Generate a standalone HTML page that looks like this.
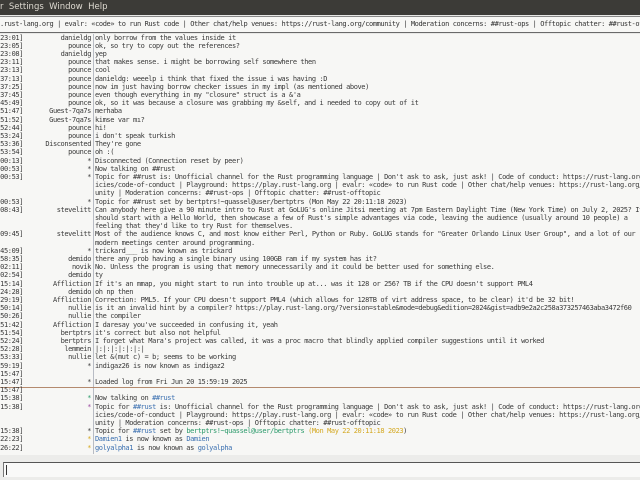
<!DOCTYPE html>
<html><head><style>
*{margin:0;padding:0;box-sizing:border-box}
body{width:640px;height:480px;overflow:hidden;background:#f7f7f5;position:relative;font-family:"DejaVu Sans Mono","Liberation Mono",monospace;}
#menu{position:absolute;left:0;top:0;width:640px;height:15px;background:#3c3b37;color:#dfdbd2;font-family:"DejaVu Sans","Liberation Sans",sans-serif;font-size:8.5px;line-height:15px;white-space:pre}
#tb{position:absolute;left:0;top:15px;width:640px;height:19px;background:#e8e8e6}
#topic{position:absolute;left:0;top:16px;width:640px;height:17px;background:#f7f7f5;border-top:1px solid #888;border-bottom:1px solid #6a6a6a;font-size:7px;letter-spacing:-0.41px;line-height:15px;white-space:pre;color:#333;overflow:hidden}
.l{position:absolute;left:0;height:8.2px;width:640px;font-size:7px;letter-spacing:-0.41px;line-height:8.2px;white-space:pre;color:#3a3a3a}
.t{position:absolute;right:617px;}
.n{position:absolute;right:549px;}
.m{position:absolute;left:95px;}
#sep{position:absolute;left:93px;top:34px;width:1px;height:420px;background:#b8bcc4}
#brown{position:absolute;left:0;top:387px;width:640px;height:1px;background:#b48a6e}
#bot{position:absolute;left:0;top:455px;width:640px;height:25px;background:#ececea}
#inp{position:absolute;left:3px;top:462px;width:640px;height:15px;background:#f9f9f8;border-top:1px solid #555;border-left:1px solid #777}
#cur{position:absolute;left:6px;top:465px;width:1px;height:10px;background:#333}
.b{color:#3a6fb0}.g{color:#2a9a6a}.y{color:#d4a820}
</style></head><body>
<div id="menu">r  Settings  Window  Help</div>
<div id="tb"></div>
<div id="topic">.rust-lang.org | evalr: «code» to run Rust code | Other chat/help venues: https://rust-lang.org/community | Moderation concerns: ##rust-ops | Offtopic chatter: ##rust-offtopic</div>
<div id="sep"></div>
<div id="brown"></div>
<div class="l" style="top:33.6px"><span class="t">23:01]</span><span class="n">danieldg</span><span class="m">only borrow from the values inside it</span></div>
<div class="l" style="top:41.8px"><span class="t">23:05]</span><span class="n">pounce</span><span class="m">ok, so try to copy out the references?</span></div>
<div class="l" style="top:50.0px"><span class="t">23:08]</span><span class="n">danieldg</span><span class="m">yep</span></div>
<div class="l" style="top:58.2px"><span class="t">23:11]</span><span class="n">pounce</span><span class="m">that makes sense. i might be borrowing self somewhere then</span></div>
<div class="l" style="top:66.4px"><span class="t">23:13]</span><span class="n">pounce</span><span class="m">cool</span></div>
<div class="l" style="top:74.6px"><span class="t">37:13]</span><span class="n">pounce</span><span class="m">danieldg: weeelp i think that fixed the issue i was having :D</span></div>
<div class="l" style="top:82.8px"><span class="t">37:25]</span><span class="n">pounce</span><span class="m">now im just having borrow checker issues in my impl (as mentioned above)</span></div>
<div class="l" style="top:91.0px"><span class="t">37:45]</span><span class="n">pounce</span><span class="m">even though everything in my "closure" struct is a &amp;'a</span></div>
<div class="l" style="top:99.2px"><span class="t">45:49]</span><span class="n">pounce</span><span class="m">ok, so it was because a closure was grabbing my &amp;self, and i needed to copy out of it</span></div>
<div class="l" style="top:107.4px"><span class="t">51:47]</span><span class="n">Guest-7qa7s</span><span class="m">merhaba</span></div>
<div class="l" style="top:115.6px"><span class="t">51:52]</span><span class="n">Guest-7qa7s</span><span class="m">kimse var mı?</span></div>
<div class="l" style="top:123.8px"><span class="t">52:44]</span><span class="n">pounce</span><span class="m">hi!</span></div>
<div class="l" style="top:132.0px"><span class="t">53:24]</span><span class="n">pounce</span><span class="m">i don't speak turkish</span></div>
<div class="l" style="top:140.2px"><span class="t">53:36]</span><span class="n">Disconsented</span><span class="m">They're gone</span></div>
<div class="l" style="top:148.4px"><span class="t">53:54]</span><span class="n">pounce</span><span class="m">oh :(</span></div>
<div class="l" style="top:156.6px"><span class="t">00:13]</span><span class="n">*</span><span class="m">Disconnected (Connection reset by peer)</span></div>
<div class="l" style="top:164.8px"><span class="t">00:53]</span><span class="n">*</span><span class="m">Now talking on ##rust</span></div>
<div class="l" style="top:173.0px"><span class="t">00:53]</span><span class="n">*</span><span class="m">Topic for ##rust is: Unofficial channel for the Rust programming language | Don't ask to ask, just ask! | Code of conduct: https://rust-lang.org/pol</span></div>
<div class="l" style="top:181.2px"><span class="m">icies/code-of-conduct | Playground: https://play.rust-lang.org | evalr: «code» to run Rust code | Other chat/help venues: https://rust-lang.org/comm</span></div>
<div class="l" style="top:189.4px"><span class="m">unity | Moderation concerns: ##rust-ops | Offtopic chatter: ##rust-offtopic</span></div>
<div class="l" style="top:197.6px"><span class="t">00:53]</span><span class="n">*</span><span class="m">Topic for ##rust set by bertptrs!~quassel@user/bertptrs (Mon May 22 20:11:18 2023)</span></div>
<div class="l" style="top:205.8px"><span class="t">08:43]</span><span class="n">stevelitt</span><span class="m">Can anybody here give a 90 minute intro to Rust at GoLUG's online Jitsi meeting at 7pm Eastern Daylight Time (New York Time) on July 2, 2025? It</span></div>
<div class="l" style="top:214.0px"><span class="m">should start with a Hello World, then showcase a few of Rust's simple advantages via code, leaving the audience (usually around 10 people) a</span></div>
<div class="l" style="top:222.2px"><span class="m">feeling that they'd like to try Rust for themselves.</span></div>
<div class="l" style="top:230.4px"><span class="t">09:45]</span><span class="n">stevelitt</span><span class="m">Most of the audience knows C, and most know either Perl, Python or Ruby. GoLUG stands for "Greater Orlando Linux User Group", and a lot of our</span></div>
<div class="l" style="top:238.6px"><span class="m">modern meetings center around programming.</span></div>
<div class="l" style="top:246.8px"><span class="t">45:09]</span><span class="n">*</span><span class="m">trickard___ is now known as trickard</span></div>
<div class="l" style="top:255.0px"><span class="t">58:35]</span><span class="n">demido</span><span class="m">there any prob having a single binary using 100GB ram if my system has it?</span></div>
<div class="l" style="top:263.2px"><span class="t">02:11]</span><span class="n">novik</span><span class="m">No. Unless the program is using that memory unnecessarily and it could be better used for something else.</span></div>
<div class="l" style="top:271.4px"><span class="t">02:54]</span><span class="n">demido</span><span class="m">ty</span></div>
<div class="l" style="top:279.6px"><span class="t">15:14]</span><span class="n">Affliction</span><span class="m">If it's an mmap, you might start to run into trouble up at... was it 128 or 256? TB if the CPU doesn't support PML4</span></div>
<div class="l" style="top:287.8px"><span class="t">24:28]</span><span class="n">demido</span><span class="m">oh np then</span></div>
<div class="l" style="top:296.0px"><span class="t">29:19]</span><span class="n">Affliction</span><span class="m">Correction: PML5. If your CPU doesn't support PML4 (which allows for 128TB of virt address space, to be clear) it'd be 32 bit!</span></div>
<div class="l" style="top:304.2px"><span class="t">50:14]</span><span class="n">nullie</span><span class="m">is it an invalid hint by a compiler? https://play.rust-lang.org/?version=stable&amp;mode=debug&amp;edition=2024&amp;gist=adb9e2a2c258a373257463aba3472f60</span></div>
<div class="l" style="top:312.4px"><span class="t">50:26]</span><span class="n">nullie</span><span class="m">the compiler</span></div>
<div class="l" style="top:320.6px"><span class="t">51:42]</span><span class="n">Affliction</span><span class="m">I daresay you've succeeded in confusing it, yeah</span></div>
<div class="l" style="top:328.8px"><span class="t">51:54]</span><span class="n">bertptrs</span><span class="m">it's correct but also not helpful</span></div>
<div class="l" style="top:337.0px"><span class="t">52:24]</span><span class="n">bertptrs</span><span class="m">I forget what Mara's project was called, it was a proc macro that blindly applied compiler suggestions until it worked</span></div>
<div class="l" style="top:345.2px"><span class="t">52:28]</span><span class="n">lemmein</span><span class="m">|:|:|:|:|:|:|</span></div>
<div class="l" style="top:353.4px"><span class="t">53:33]</span><span class="n">nullie</span><span class="m">let &amp;(mut c) = b; seems to be working</span></div>
<div class="l" style="top:361.6px"><span class="t">59:19]</span><span class="n">*</span><span class="m">indigaz26 is now known as indigaz2</span></div>
<div class="l" style="top:369.8px"><span class="t">15:47]</span></div>
<div class="l" style="top:378.0px"><span class="t">15:47]</span><span class="n">*</span><span class="m">Loaded log from Fri Jun 20 15:59:19 2025</span></div>
<div class="l" style="top:386.2px"><span class="t">15:47]</span></div>
<div class="l" style="top:394.4px"><span class="t">15:38]</span><span class="n g">*</span><span class="m">Now talking on <span class="b">##rust</span></span></div>
<div class="l" style="top:402.6px"><span class="t">15:38]</span><span class="n" style="color:#9a4aa0">*</span><span class="m">Topic for <span class="b">##rust</span> is: Unofficial channel for the Rust programming language | Don't ask to ask, just ask! | Code of conduct: https://rust-lang.org/pol</span></div>
<div class="l" style="top:410.8px"><span class="m">icies/code-of-conduct | Playground: https://play.rust-lang.org | evalr: «code» to run Rust code | Other chat/help venues: https://rust-lang.org/comm</span></div>
<div class="l" style="top:419.0px"><span class="m">unity | Moderation concerns: ##rust-ops | Offtopic chatter: ##rust-offtopic</span></div>
<div class="l" style="top:427.2px"><span class="t">15:38]</span><span class="n">*</span><span class="m">Topic for <span class="b">##rust</span> set by <span class="g">bertptrs!~quassel@user/bertptrs</span> <span class="y">(Mon May 22 20:11:18 2023</span>)</span></div>
<div class="l" style="top:435.4px"><span class="t">22:23]</span><span class="n y">*</span><span class="m"><span class="b">Damien1</span> is now known as <span class="b">Damien</span></span></div>
<div class="l" style="top:443.6px"><span class="t">26:22]</span><span class="n y">*</span><span class="m"><span class="b">golyalpha1</span> is now known as <span class="b">golyalpha</span></span></div>
<div id="bot"></div>
<div id="inp"></div>
<div id="cur"></div>
</body></html>
